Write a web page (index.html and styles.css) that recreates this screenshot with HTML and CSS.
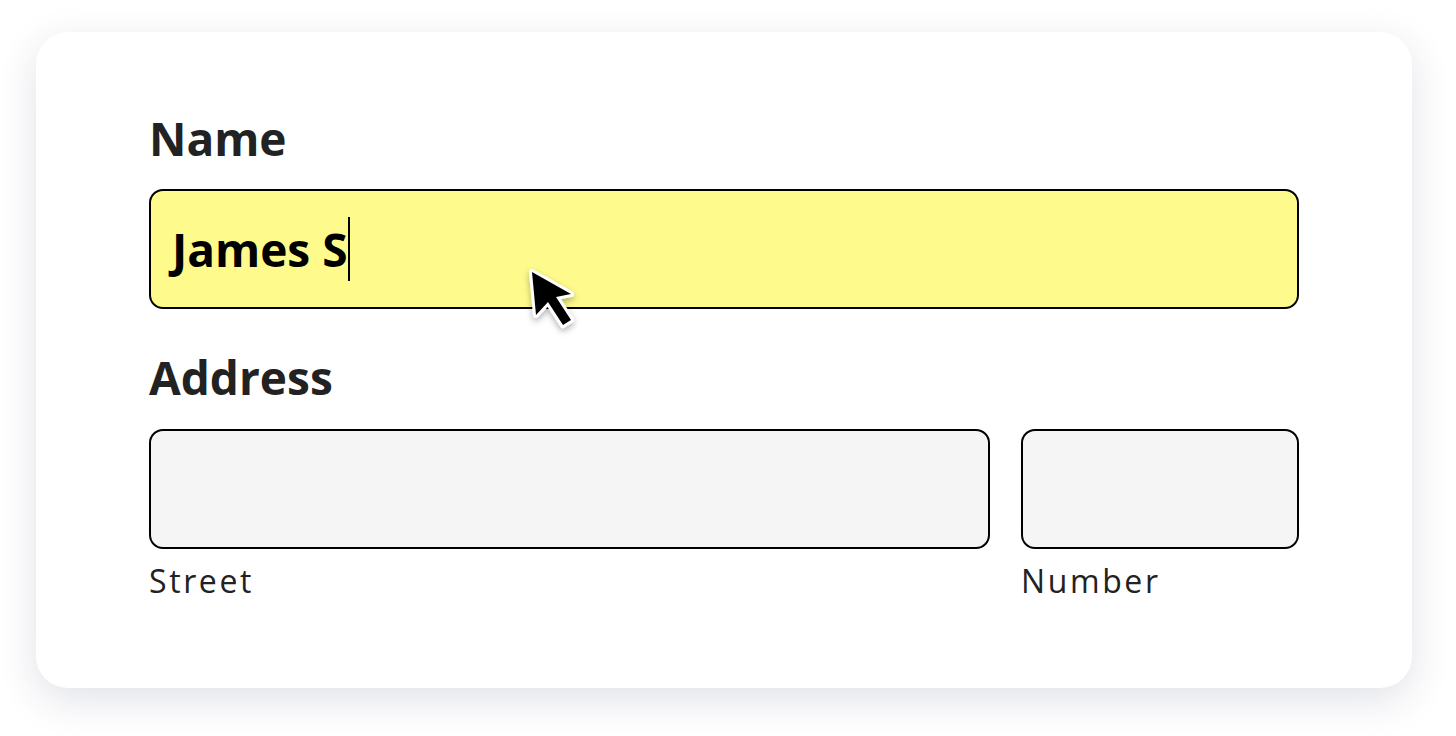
FILE: index.html
```html
<!DOCTYPE html>
<html lang="en">
<head>
<meta charset="utf-8">
<title>Form</title>
<link rel="stylesheet" href="styles.css">
</head>
<body>
<div class="card">
  <div class="field">
    <div class="label">Name</div>
    <div class="input input-active">
      <span class="value">James S</span><span class="caret"></span>
    </div>
  </div>
  <div class="field field-address">
    <div class="label label-address">Address</div>
    <div class="address-row">
      <div class="sub">
        <div class="input"></div>
        <div class="caption">Street</div>
      </div>
      <div class="sub">
        <div class="input"></div>
        <div class="caption">Number</div>
      </div>
    </div>
  </div>
  <svg class="cursor" width="70" height="80" viewBox="0 0 70 80">
    <defs>
      <filter id="sh" x="-50%" y="-50%" width="200%" height="200%">
        <feDropShadow dx="0" dy="3" stdDeviation="3" flood-color="#000" flood-opacity="0.3"/>
      </filter>
    </defs>
    <polygon points="12,14 16,57 28,44 43,67 51,62 36,39 51,36" fill="#000" stroke="#fff" stroke-width="6" stroke-linejoin="round" filter="url(#sh)"/>
    <polygon points="12,14 16,57 28,44 43,67 51,62 36,39 51,36" fill="#000"/>
  </svg>
</div>
</body>
</html>
```

FILE: styles.css
```css
html, body {
  margin: 0;
  padding: 0;
  background: #ffffff;
}

body {
  min-height: 736px;
  font-family: "Open Sans", Lato, sans-serif;
  color: #222222;
}

.card {
  position: relative;
  box-sizing: border-box;
  margin: 32px 0 0 36px;
  width: 1376px;
  height: 656px;
  padding: 78px 113px 0 113px;
  background: #ffffff;
  border-radius: 32px;
  box-shadow: 0 12px 40px rgba(40, 50, 90, 0.14);
}

.label {
  font-size: 46px;
  font-weight: 700;
  line-height: 56px;
  margin-bottom: 23px;
  color: #222222;
}

.label-address {
  margin-bottom: 24px;
}

.field-address {
  margin-top: 40px;
}

.input {
  box-sizing: border-box;
  height: 120px;
  border: 2px solid #000000;
  border-radius: 14px;
  background: #f5f5f5;
}

.input-active {
  display: flex;
  align-items: center;
  padding-left: 21px;
  background: #fefa8c;
}

.value {
  font-size: 46px;
  font-weight: 700;
  line-height: 56px;
  color: #000000;
}

.caret {
  display: inline-block;
  width: 2px;
  height: 64px;
  margin-left: 0;
  background: #000000;
}

.address-row {
  display: grid;
  grid-template-columns: 1fr 278px;
  column-gap: 31px;
}

.caption {
  margin-top: 12px;
  font-size: 32px;
  line-height: 40px;
  letter-spacing: 2.6px;
  color: #222222;
}

.cursor {
  position: absolute;
  left: 484px;
  top: 226px;
}
```
